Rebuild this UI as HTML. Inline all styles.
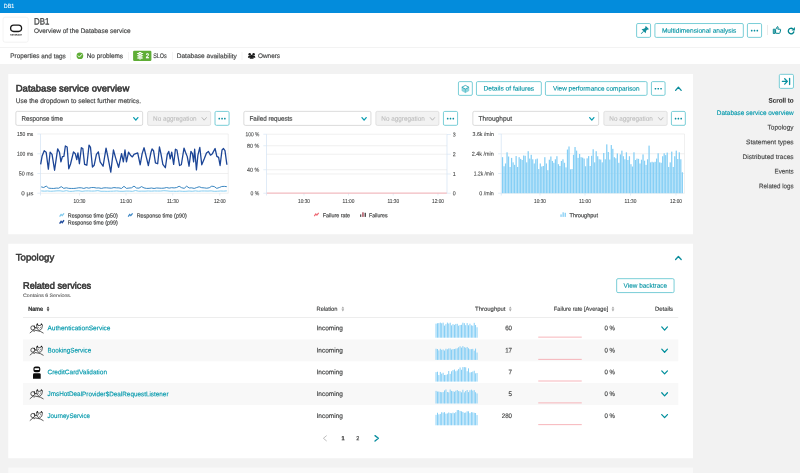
<!DOCTYPE html>
<html><head><meta charset="utf-8"><title>DB1</title>
<style>
html,body{margin:0;padding:0;}
body{width:800px;height:473px;overflow:hidden;position:relative;background:#f2f2f2;}
#w{position:absolute;left:0;top:0;width:800px;height:473px;will-change:transform;}
svg{position:absolute;left:0;top:0;display:block;font-family:"Liberation Sans",sans-serif;}
text{white-space:pre;}
</style></head><body><div id="w">
<svg width="800" height="473" viewBox="0 0 800 473">
<rect x="0.00" y="0.00" width="800.00" height="13.10" fill="#038cdc"/>
<text x="3.75" y="8.00" font-size="5.99" fill="#fff" stroke="#fff" stroke-width="0.1" textLength="10.50" lengthAdjust="spacingAndGlyphs" transform="rotate(0.06 3.75 8.00)">DB1</text>
<rect x="0.00" y="13.00" width="800.00" height="51.00" fill="#fff"/>
<rect x="0.00" y="47.00" width="800.00" height="0.60" fill="#ebebeb"/>
<rect x="3.05" y="17.20" width="25.15" height="25.00" fill="#fff" stroke="#ebebeb" stroke-width="0.6" rx="2"/>
<rect x="10.6" y="25.2" width="11" height="6.3" rx="3.15" fill="none" stroke="#1a1a1a" stroke-width="1.3"/>
<text x="10.30" y="35.50" font-size="2.03" fill="#3a3a3a" stroke="#3a3a3a" stroke-width="0.05" font-weight="bold" textLength="11.60" lengthAdjust="spacingAndGlyphs" transform="rotate(0.06 10.30 35.50)">DATABASE</text>
<text x="34.00" y="24.40" font-size="9.10" fill="#454646" stroke="#454646" stroke-width="0.3" textLength="15.40" lengthAdjust="spacingAndGlyphs" transform="rotate(0.06 34.00 24.40)">DB1</text>
<text x="34.00" y="32.90" font-size="6.63" fill="#454646" stroke="#454646" stroke-width="0.18" textLength="96.50" lengthAdjust="spacingAndGlyphs" transform="rotate(0.06 34.00 32.90)">Overview of the Database service</text>
<rect x="636.62" y="23.53" width="13.95" height="13.85" fill="#fff" stroke="#62c5d0" stroke-width="0.85" rx="1.3"/>
<g transform="translate(644.4 30.5) rotate(45) scale(1.12)" fill="#0e8c9a"><rect x="-1.9" y="-3.7" width="3.8" height="1.1" rx="0.3"/><rect x="-1.3" y="-2.9" width="2.6" height="2.6"/><path d="M-2.6 1.0 L2.6 1.0 L1.5 -0.7 L-1.5 -0.7 Z"/><rect x="-0.35" y="0.9" width="0.7" height="3.3"/></g>
<rect x="654.92" y="23.53" width="88.40" height="13.85" fill="#fff" stroke="#62c5d0" stroke-width="0.85" rx="1.3"/>
<text x="661.88" y="32.70" font-size="6.63" fill="#0093a3" stroke="#0093a3" stroke-width="0.12" textLength="74.50" lengthAdjust="spacingAndGlyphs" transform="rotate(0.06 661.88 32.70)">Multidimensional analysis</text>
<rect x="747.42" y="23.53" width="14.15" height="13.85" fill="#fff" stroke="#62c5d0" stroke-width="0.85" rx="1.3"/>
<g fill="#0a8fa0"><rect x="750.90" y="29.85" width="1.6" height="1.6" rx="0.45"/><rect x="753.70" y="29.85" width="1.6" height="1.6" rx="0.45"/><rect x="756.50" y="29.85" width="1.6" height="1.6" rx="0.45"/></g>
<rect x="767.30" y="25.00" width="0.60" height="10.00" fill="#ddd"/>
<g fill="none" stroke="#00848e" stroke-width="1.0" stroke-linejoin="round"><rect x="773.3" y="29.2" width="1.5" height="4.3"/><path d="M775.6 33.2 L775.6 29.6 L777.4 26.6 Q778.4 26.6 778.1 27.8 L777.8 29.2 L780.2 29.2 Q780.8 29.3 780.6 30 L779.9 32.8 Q779.7 33.4 779.1 33.4 Z"/></g>
<path d="M793.9 31.4 A2.8 2.8 0 1 1 792.9 28.9" fill="none" stroke="#00848e" stroke-width="1.35"/><path d="M794.9 27.0 L794.9 30.4 L791.5 30.4 Z" fill="#00848e"/>
<text x="10.25" y="58.10" font-size="6.63" fill="#454646" stroke="#454646" stroke-width="0.18" textLength="55.50" lengthAdjust="spacingAndGlyphs" transform="rotate(0.06 10.25 58.10)">Properties and tags</text>
<rect x="70.20" y="52.00" width="0.60" height="8.00" fill="#ebebeb"/>
<circle cx="79.9" cy="55.75" r="3.35" fill="#5ead35"/><polyline points="78.2,55.8 79.4,57.1 81.7,54.5" fill="none" stroke="#fff" stroke-width="0.95" stroke-linecap="round" stroke-linejoin="round"/>
<text x="86.75" y="58.10" font-size="6.63" fill="#454646" stroke="#454646" stroke-width="0.18" textLength="36.25" lengthAdjust="spacingAndGlyphs" transform="rotate(0.06 86.75 58.10)">No problems</text>
<rect x="128.00" y="52.00" width="0.60" height="8.00" fill="#ebebeb"/>
<rect x="133.10" y="50.80" width="18.30" height="10.10" fill="#5ead35" rx="1.2"/>
<g fill="#fff"><rect x="138.5" y="52" width="3.1" height="7.4" rx="1.3"/><rect x="136.9" y="53.1" width="6.3" height="1.0" rx="0.4" opacity="0.9"/><rect x="136.9" y="55.3" width="6.3" height="1.0" rx="0.4" opacity="0.9"/><rect x="136.9" y="57.5" width="6.3" height="1.0" rx="0.4" opacity="0.9"/></g><g fill="#5ead35"><circle cx="140.05" cy="53.6" r="0.6"/><circle cx="140.05" cy="55.8" r="0.6"/><circle cx="140.05" cy="58" r="0.6"/></g>
<text x="145.84" y="58.10" font-size="6.42" fill="#fff" stroke="#fff" stroke-width="0.3" textLength="3.32" lengthAdjust="spacingAndGlyphs" transform="rotate(0.06 145.84 58.10)">2</text>
<text x="153.25" y="58.10" font-size="6.63" fill="#454646" stroke="#454646" stroke-width="0.18" textLength="13.50" lengthAdjust="spacingAndGlyphs" transform="rotate(0.06 153.25 58.10)">SLOs</text>
<rect x="172.20" y="52.00" width="0.60" height="8.00" fill="#ebebeb"/>
<text x="176.75" y="58.10" font-size="6.63" fill="#454646" stroke="#454646" stroke-width="0.18" textLength="60.00" lengthAdjust="spacingAndGlyphs" transform="rotate(0.06 176.75 58.10)">Database availability</text>
<rect x="241.70" y="52.00" width="0.60" height="8.00" fill="#ebebeb"/>
<g fill="#1c1c1c"><circle cx="249.7" cy="54.3" r="1.25"/><circle cx="253.6" cy="54.3" r="1.25"/><path d="M247.9 57.7 Q247.9 55.6 249.7 55.6 L253.6 55.6 Q255.4 55.6 255.4 57.7 Z"/><circle cx="251.65" cy="56" r="1.3"/><path d="M249.6 58.7 Q249.6 57 251.65 57 Q253.7 57 253.7 58.7 Z"/></g>
<text x="258.00" y="58.10" font-size="6.63" fill="#454646" stroke="#454646" stroke-width="0.18" textLength="22.00" lengthAdjust="spacingAndGlyphs" transform="rotate(0.06 258.00 58.10)">Owners</text>
<rect x="0.00" y="64.00" width="800.00" height="409.00" fill="#f2f2f2"/>
<rect x="8.25" y="74.00" width="684.75" height="160.25" fill="#fff"/>
<text x="15.75" y="91.50" font-size="9.42" fill="#363636" stroke="#363636" stroke-width="0.55" textLength="113.50" lengthAdjust="spacingAndGlyphs" transform="rotate(0.06 15.75 91.50)">Database service overview</text>
<text x="15.75" y="103.00" font-size="6.63" fill="#454646" stroke="#454646" stroke-width="0.18" textLength="125.25" lengthAdjust="spacingAndGlyphs" transform="rotate(0.06 15.75 103.00)">Use the dropdown to select further metrics.</text>
<rect x="458.43" y="81.62" width="13.90" height="13.75" fill="#fff" stroke="#62c5d0" stroke-width="0.85" rx="1.3"/>
<path d="M461.9 87.2 L465.4 89.1 L468.9 87.2 L468.9 90.8 L465.4 92.7 L461.9 90.8 Z" fill="#8fd6de" stroke="#5fc1cc" stroke-width="0.4"/><path d="M465.4 85.4 L468.9 87.2 L465.4 89.0 L461.9 87.2 Z" fill="#fff" stroke="#1f9fae" stroke-width="0.8" stroke-linejoin="round"/><path d="M465.4 89.2 L465.4 92.6" stroke="#3fb2bf" stroke-width="0.6"/>
<rect x="476.43" y="81.62" width="64.90" height="13.75" fill="#fff" stroke="#62c5d0" stroke-width="0.85" rx="1.3"/>
<text x="483.62" y="90.60" font-size="6.63" fill="#0093a3" stroke="#0093a3" stroke-width="0.12" textLength="50.50" lengthAdjust="spacingAndGlyphs" transform="rotate(0.06 483.62 90.60)">Details of failures</text>
<rect x="545.42" y="81.62" width="101.65" height="13.75" fill="#fff" stroke="#62c5d0" stroke-width="0.85" rx="1.3"/>
<text x="553.00" y="90.60" font-size="6.63" fill="#0093a3" stroke="#0093a3" stroke-width="0.12" textLength="86.50" lengthAdjust="spacingAndGlyphs" transform="rotate(0.06 553.00 90.60)">View performance comparison</text>
<rect x="651.42" y="81.62" width="13.65" height="13.75" fill="#fff" stroke="#62c5d0" stroke-width="0.85" rx="1.3"/>
<g fill="#0a8fa0"><rect x="654.65" y="87.90" width="1.6" height="1.6" rx="0.45"/><rect x="657.45" y="87.90" width="1.6" height="1.6" rx="0.45"/><rect x="660.25" y="87.90" width="1.6" height="1.6" rx="0.45"/></g>
<polyline points="675.6,90.35 678.4,87.25 681.2,90.35" fill="none" stroke="#0a8d9c" stroke-width="1.3" stroke-linecap="round" stroke-linejoin="round"/>
<rect x="15.85" y="111.35" width="126.80" height="14.05" fill="#fff" stroke="#ccc" stroke-width="0.7" rx="1.5"/>
<text x="21.50" y="120.80" font-size="6.63" fill="#454646" stroke="#454646" stroke-width="0.18" textLength="41.50" lengthAdjust="spacingAndGlyphs" transform="rotate(0.06 21.50 120.80)">Response time</text>
<polyline points="133.70000000000002,117.60000000000001 135.8,120.2 137.9,117.60000000000001" fill="none" stroke="#0a9db0" stroke-width="1.25" stroke-linecap="round" stroke-linejoin="round"/>
<rect x="147.60" y="111.35" width="63.05" height="14.05" fill="#f2f2f2" stroke="#d9d9d9" stroke-width="0.7" rx="1.5"/>
<text x="153.05" y="120.80" font-size="6.63" fill="#bdbdbd" stroke="#bdbdbd" stroke-width="0.1" textLength="43.50" lengthAdjust="spacingAndGlyphs" transform="rotate(0.06 153.05 120.80)">No aggregation</text>
<polyline points="202.0,117.60000000000001 204.2,120.2 206.4,117.60000000000001" fill="none" stroke="#b2b2b2" stroke-width="0.9" stroke-linecap="round" stroke-linejoin="round"/>
<rect x="215.03" y="111.42" width="14.05" height="13.90" fill="#fff" stroke="#62c5d0" stroke-width="0.85" rx="1.3"/>
<g fill="#0a8fa0"><rect x="218.45" y="117.78" width="1.6" height="1.6" rx="0.45"/><rect x="221.25" y="117.78" width="1.6" height="1.6" rx="0.45"/><rect x="224.05" y="117.78" width="1.6" height="1.6" rx="0.45"/></g>
<rect x="243.85" y="111.35" width="127.10" height="14.05" fill="#fff" stroke="#ccc" stroke-width="0.7" rx="1.5"/>
<text x="249.50" y="120.80" font-size="6.63" fill="#454646" stroke="#454646" stroke-width="0.18" textLength="43.00" lengthAdjust="spacingAndGlyphs" transform="rotate(0.06 249.50 120.80)">Failed requests</text>
<polyline points="362.0,117.60000000000001 364.1,120.2 366.2,117.60000000000001" fill="none" stroke="#0a9db0" stroke-width="1.25" stroke-linecap="round" stroke-linejoin="round"/>
<rect x="375.85" y="111.35" width="63.05" height="14.05" fill="#f2f2f2" stroke="#d9d9d9" stroke-width="0.7" rx="1.5"/>
<text x="381.30" y="120.80" font-size="6.63" fill="#bdbdbd" stroke="#bdbdbd" stroke-width="0.1" textLength="43.50" lengthAdjust="spacingAndGlyphs" transform="rotate(0.06 381.30 120.80)">No aggregation</text>
<polyline points="430.25,117.60000000000001 432.45,120.2 434.65,117.60000000000001" fill="none" stroke="#b2b2b2" stroke-width="0.9" stroke-linecap="round" stroke-linejoin="round"/>
<rect x="443.43" y="111.42" width="14.15" height="13.90" fill="#fff" stroke="#62c5d0" stroke-width="0.85" rx="1.3"/>
<g fill="#0a8fa0"><rect x="446.90" y="117.78" width="1.6" height="1.6" rx="0.45"/><rect x="449.70" y="117.78" width="1.6" height="1.6" rx="0.45"/><rect x="452.50" y="117.78" width="1.6" height="1.6" rx="0.45"/></g>
<rect x="472.85" y="111.35" width="125.80" height="14.05" fill="#fff" stroke="#ccc" stroke-width="0.7" rx="1.5"/>
<text x="478.50" y="120.80" font-size="6.63" fill="#454646" stroke="#454646" stroke-width="0.18" textLength="33.50" lengthAdjust="spacingAndGlyphs" transform="rotate(0.06 478.50 120.80)">Throughput</text>
<polyline points="589.6999999999999,117.60000000000001 591.8,120.2 593.9,117.60000000000001" fill="none" stroke="#0a9db0" stroke-width="1.25" stroke-linecap="round" stroke-linejoin="round"/>
<rect x="603.85" y="111.35" width="63.30" height="14.05" fill="#f2f2f2" stroke="#d9d9d9" stroke-width="0.7" rx="1.5"/>
<text x="609.30" y="120.80" font-size="6.63" fill="#bdbdbd" stroke="#bdbdbd" stroke-width="0.1" textLength="43.50" lengthAdjust="spacingAndGlyphs" transform="rotate(0.06 609.30 120.80)">No aggregation</text>
<polyline points="658.5,117.60000000000001 660.7,120.2 662.9,117.60000000000001" fill="none" stroke="#b2b2b2" stroke-width="0.9" stroke-linecap="round" stroke-linejoin="round"/>
<rect x="671.42" y="111.42" width="13.90" height="13.90" fill="#fff" stroke="#62c5d0" stroke-width="0.85" rx="1.3"/>
<g fill="#0a8fa0"><rect x="674.77" y="117.78" width="1.6" height="1.6" rx="0.45"/><rect x="677.58" y="117.78" width="1.6" height="1.6" rx="0.45"/><rect x="680.38" y="117.78" width="1.6" height="1.6" rx="0.45"/></g>
<line x1="40.5" y1="134" x2="228.25" y2="134" stroke="#e6e6e6" stroke-width="0.6"/><line x1="40.5" y1="153.75" x2="228.25" y2="153.75" stroke="#e6e6e6" stroke-width="0.6"/><line x1="40.5" y1="173.5" x2="228.25" y2="173.5" stroke="#e6e6e6" stroke-width="0.6"/><line x1="40.5" y1="193.25" x2="228.25" y2="193.25" stroke="#e6e6e6" stroke-width="0.6"/><line x1="37.3" y1="134" x2="40.5" y2="134" stroke="#d2e2f3" stroke-width="0.6"/><line x1="37.3" y1="153.75" x2="40.5" y2="153.75" stroke="#d2e2f3" stroke-width="0.6"/><line x1="37.3" y1="173.5" x2="40.5" y2="173.5" stroke="#d2e2f3" stroke-width="0.6"/><line x1="37.3" y1="193.25" x2="40.5" y2="193.25" stroke="#d2e2f3" stroke-width="0.6"/><line x1="228.25" y1="134" x2="228.25" y2="193.25" stroke="#e6e6e6" stroke-width="0.6"/><line x1="40.5" y1="134" x2="40.5" y2="195.5" stroke="#d2e2f3" stroke-width="0.7"/><line x1="79.5" y1="193.25" x2="79.5" y2="195.5" stroke="#d2e2f3" stroke-width="0.6"/><line x1="126" y1="193.25" x2="126" y2="195.5" stroke="#d2e2f3" stroke-width="0.6"/><line x1="172.75" y1="193.25" x2="172.75" y2="195.5" stroke="#d2e2f3" stroke-width="0.6"/><line x1="219.75" y1="193.25" x2="219.75" y2="195.5" stroke="#d2e2f3" stroke-width="0.6"/><polyline points="40.66,164.32 42.14,155.89 44.21,150.71 46.14,152.19 48.36,169.20 50.13,152.19 52.05,154.41 54.57,170.24 57.67,148.93 59.45,152.19 60.93,161.80 62.41,156.63 63.89,156.33 65.37,145.98 67.14,147.01 68.77,168.76 70.54,164.02 73.50,151.89 75.28,153.67 76.76,159.59 77.94,152.93 79.42,163.73 81.34,147.75 82.82,148.49 84.60,164.32 86.82,165.21 89.04,145.09 90.51,147.46 92.44,166.98 94.21,165.21 96.43,154.41 98.36,151.89 100.13,161.80 103.09,166.24 106.05,148.05 107.53,155.15 110.78,172.16 113.44,149.97 115.66,158.11 118.62,167.28 121.58,153.67 123.36,161.80 124.98,149.97 126.46,161.80 128.53,152.19 130.46,155.15 132.38,156.92 134.00,154.41 135.78,153.67 137.70,152.93 140.21,164.76 142.14,153.67 144.06,147.75 145.83,155.15 148.35,165.50 151.01,152.19 152.05,148.93 153.53,150.71 155.45,162.84 157.67,163.73 159.44,147.01 160.92,153.67 162.85,164.32 165.36,167.72 167.28,154.41 168.76,151.45 170.24,158.85 171.72,152.19 173.64,164.32 175.42,149.23 176.90,149.97 179.56,165.50 181.34,164.76 184.00,148.05 185.48,152.19 187.25,156.63 189.03,166.24 190.95,151.45 192.43,153.67 193.62,161.80 194.65,149.23 196.43,169.94 197.91,155.15 199.83,147.46 201.75,164.76 204.27,158.85 206.49,152.93 208.41,151.45 210.48,155.15 212.40,153.67 215.07,148.49 216.84,156.33 218.62,157.37 220.09,165.50 222.02,149.97 223.50,148.49 224.98,150.71 226.90,164.76" fill="none" stroke="#1c4596" stroke-width="1.3" stroke-linejoin="round"/><polyline points="41.20,190.93 44.35,191.17 47.49,190.96 50.64,191.25 53.78,191.10 56.93,190.85 60.07,190.84 63.22,191.25 66.37,190.67 69.51,191.35 72.66,191.29 75.80,190.87 78.95,190.80 82.09,191.33 85.24,190.93 88.39,190.91 91.53,191.08 94.68,191.02 97.82,190.64 100.97,191.28 104.12,191.24 107.26,191.33 110.41,191.23 113.55,191.14 116.70,190.91 119.84,191.26 122.99,191.31 126.14,191.05 129.28,191.08 132.43,191.35 135.57,190.56 138.72,191.21 141.86,191.10 145.01,191.13 148.16,190.96 151.30,191.13 154.45,190.94 157.59,191.02 160.74,191.02 163.88,190.70 167.03,190.88 170.18,191.24 173.32,191.19 176.47,191.30 179.61,191.05 182.76,191.33 185.91,191.29 189.05,191.04 192.20,191.29 195.34,190.88 198.49,191.24 201.63,190.97 204.78,190.98 207.93,191.06 211.07,190.88 214.22,191.30 217.36,191.22 220.51,190.98 223.65,191.11 226.80,190.86" fill="none" stroke="#86cdf0" stroke-width="1.0" stroke-linejoin="round"/><polyline points="41.20,186.86 43.71,187.52 46.22,186.08 48.72,188.15 51.23,188.39 53.74,188.46 56.25,188.10 58.76,188.19 61.26,186.61 63.77,188.38 66.28,187.81 68.79,188.35 71.30,188.44 73.81,188.46 76.31,188.20 78.82,187.76 81.33,187.81 83.84,188.45 86.35,187.64 88.85,188.17 91.36,187.55 93.87,187.53 96.38,188.01 98.89,187.91 101.39,188.42 103.90,187.87 106.41,187.80 108.92,188.04 111.43,188.17 113.94,187.59 116.44,187.86 118.95,187.90 121.46,188.45 123.97,186.30 126.48,188.40 128.98,188.05 131.49,187.83 134.00,186.09 136.51,188.04 139.02,188.15 141.52,186.59 144.03,187.91 146.54,188.42 149.05,188.35 151.56,188.02 154.06,188.49 156.57,187.97 159.08,188.14 161.59,188.28 164.10,188.11 166.61,187.52 169.11,188.13 171.62,187.67 174.13,187.93 176.64,187.54 179.15,186.25 181.65,187.72 184.16,188.37 186.67,186.18 189.18,187.97 191.69,187.84 194.19,188.43 196.70,187.54 199.21,186.75 201.72,187.70 204.23,187.88 206.74,188.22 209.24,187.75 211.75,186.17 214.26,186.57 216.77,188.39 219.28,187.56 221.78,186.50 224.29,186.39 226.80,186.67" fill="none" stroke="#2f7fbd" stroke-width="0.95" stroke-linejoin="round"/>
<text x="17.05" y="135.90" font-size="5.67" fill="#454646" stroke="#454646" stroke-width="0.1" textLength="16.25" lengthAdjust="spacingAndGlyphs" transform="rotate(0.06 17.05 135.90)">150 ms</text>
<text x="17.05" y="155.65" font-size="5.67" fill="#454646" stroke="#454646" stroke-width="0.1" textLength="16.25" lengthAdjust="spacingAndGlyphs" transform="rotate(0.06 17.05 155.65)">100 ms</text>
<text x="18.80" y="175.40" font-size="5.67" fill="#454646" stroke="#454646" stroke-width="0.1" textLength="14.50" lengthAdjust="spacingAndGlyphs" transform="rotate(0.06 18.80 175.40)">50 ms</text>
<text x="21.30" y="195.15" font-size="5.67" fill="#454646" stroke="#454646" stroke-width="0.1" textLength="12.00" lengthAdjust="spacingAndGlyphs" transform="rotate(0.06 21.30 195.15)">0 µs</text>
<text x="73.62" y="203.00" font-size="5.67" fill="#454646" stroke="#454646" stroke-width="0.1" textLength="11.75" lengthAdjust="spacingAndGlyphs" transform="rotate(0.06 73.62 203.00)">10:30</text>
<text x="120.12" y="203.00" font-size="5.67" fill="#454646" stroke="#454646" stroke-width="0.1" textLength="11.75" lengthAdjust="spacingAndGlyphs" transform="rotate(0.06 120.12 203.00)">11:00</text>
<text x="166.88" y="203.00" font-size="5.67" fill="#454646" stroke="#454646" stroke-width="0.1" textLength="11.75" lengthAdjust="spacingAndGlyphs" transform="rotate(0.06 166.88 203.00)">11:30</text>
<text x="213.88" y="203.00" font-size="5.67" fill="#454646" stroke="#454646" stroke-width="0.1" textLength="11.75" lengthAdjust="spacingAndGlyphs" transform="rotate(0.06 213.88 203.00)">12:00</text>
<polyline points="59.6,216.6 61.1,214.4 62.2,215.6 64.0,213.3" fill="none" stroke="#7dc8ec" stroke-width="1.25"/><polyline points="128.2,216.6 129.7,214.4 130.79999999999998,215.6 132.6,213.3" fill="none" stroke="#3b86c4" stroke-width="1.25"/><polyline points="59.6,223.6 61.1,221.4 62.2,222.6 64.0,220.3" fill="none" stroke="#1f4a9c" stroke-width="1.4"/>
<text x="67.80" y="217.40" font-size="5.67" fill="#454646" stroke="#454646" stroke-width="0.18" textLength="50.00" lengthAdjust="spacingAndGlyphs" transform="rotate(0.06 67.80 217.40)">Response time (p50)</text>
<text x="136.70" y="217.40" font-size="5.67" fill="#454646" stroke="#454646" stroke-width="0.18" textLength="50.00" lengthAdjust="spacingAndGlyphs" transform="rotate(0.06 136.70 217.40)">Response time (p90)</text>
<text x="67.80" y="224.40" font-size="5.67" fill="#454646" stroke="#454646" stroke-width="0.18" textLength="50.00" lengthAdjust="spacingAndGlyphs" transform="rotate(0.06 67.80 224.40)">Response time (p99)</text>
<line x1="266.5" y1="134.25" x2="447" y2="134.25" stroke="#e6e6e6" stroke-width="0.6"/><line x1="266.5" y1="145.75" x2="447" y2="145.75" stroke="#e6e6e6" stroke-width="0.6"/><line x1="266.5" y1="154.25" x2="447" y2="154.25" stroke="#e6e6e6" stroke-width="0.6"/><line x1="266.5" y1="169.75" x2="447" y2="169.75" stroke="#e6e6e6" stroke-width="0.6"/><line x1="266.5" y1="174" x2="447" y2="174" stroke="#e6e6e6" stroke-width="0.6"/><line x1="266.5" y1="193.25" x2="447" y2="193.25" stroke="#e6e6e6" stroke-width="0.6"/><line x1="263.3" y1="134.25" x2="266.5" y2="134.25" stroke="#d2e2f3" stroke-width="0.6"/><line x1="263.3" y1="145.75" x2="266.5" y2="145.75" stroke="#d2e2f3" stroke-width="0.6"/><line x1="263.3" y1="169.75" x2="266.5" y2="169.75" stroke="#d2e2f3" stroke-width="0.6"/><line x1="263.3" y1="193.25" x2="266.5" y2="193.25" stroke="#d2e2f3" stroke-width="0.6"/><line x1="447" y1="134.5" x2="450.8" y2="134.5" stroke="#d2e2f3" stroke-width="0.6"/><line x1="447" y1="154.25" x2="450.8" y2="154.25" stroke="#d2e2f3" stroke-width="0.6"/><line x1="447" y1="174" x2="450.8" y2="174" stroke="#d2e2f3" stroke-width="0.6"/><line x1="447" y1="193.25" x2="450.8" y2="193.25" stroke="#d2e2f3" stroke-width="0.6"/><line x1="266.5" y1="134.25" x2="266.5" y2="195.5" stroke="#d2e2f3" stroke-width="0.7"/><line x1="447" y1="134.25" x2="447" y2="193.25" stroke="#d2e2f3" stroke-width="0.7"/><line x1="304" y1="193.25" x2="304" y2="195.5" stroke="#d2e2f3" stroke-width="0.6"/><line x1="348.5" y1="193.25" x2="348.5" y2="195.5" stroke="#d2e2f3" stroke-width="0.6"/><line x1="393.25" y1="193.25" x2="393.25" y2="195.5" stroke="#d2e2f3" stroke-width="0.6"/><line x1="438" y1="193.25" x2="438" y2="195.5" stroke="#d2e2f3" stroke-width="0.6"/><line x1="266.8" y1="193.1" x2="446.8" y2="193.1" stroke="#f4a3ab" stroke-width="0.85"/>
<text x="245.55" y="136.15" font-size="5.67" fill="#454646" stroke="#454646" stroke-width="0.1" textLength="13.75" lengthAdjust="spacingAndGlyphs" transform="rotate(0.06 245.55 136.15)">100 %</text>
<text x="247.05" y="147.65" font-size="5.67" fill="#454646" stroke="#454646" stroke-width="0.1" textLength="12.25" lengthAdjust="spacingAndGlyphs" transform="rotate(0.06 247.05 147.65)">80 %</text>
<text x="247.05" y="171.65" font-size="5.67" fill="#454646" stroke="#454646" stroke-width="0.1" textLength="12.25" lengthAdjust="spacingAndGlyphs" transform="rotate(0.06 247.05 171.65)">40 %</text>
<text x="250.55" y="195.15" font-size="5.67" fill="#454646" stroke="#454646" stroke-width="0.1" textLength="8.75" lengthAdjust="spacingAndGlyphs" transform="rotate(0.06 250.55 195.15)">0 %</text>
<text x="452.80" y="136.40" font-size="5.67" fill="#454646" stroke="#454646" stroke-width="0.1" textLength="2.93" lengthAdjust="spacingAndGlyphs" transform="rotate(0.06 452.80 136.40)">3</text>
<text x="452.80" y="156.15" font-size="5.67" fill="#454646" stroke="#454646" stroke-width="0.1" textLength="2.93" lengthAdjust="spacingAndGlyphs" transform="rotate(0.06 452.80 156.15)">2</text>
<text x="452.80" y="175.90" font-size="5.67" fill="#454646" stroke="#454646" stroke-width="0.1" textLength="2.93" lengthAdjust="spacingAndGlyphs" transform="rotate(0.06 452.80 175.90)">1</text>
<text x="452.80" y="195.15" font-size="5.67" fill="#454646" stroke="#454646" stroke-width="0.1" textLength="2.93" lengthAdjust="spacingAndGlyphs" transform="rotate(0.06 452.80 195.15)">0</text>
<text x="298.12" y="203.00" font-size="5.67" fill="#454646" stroke="#454646" stroke-width="0.1" textLength="11.75" lengthAdjust="spacingAndGlyphs" transform="rotate(0.06 298.12 203.00)">10:30</text>
<text x="342.62" y="203.00" font-size="5.67" fill="#454646" stroke="#454646" stroke-width="0.1" textLength="11.75" lengthAdjust="spacingAndGlyphs" transform="rotate(0.06 342.62 203.00)">11:00</text>
<text x="387.38" y="203.00" font-size="5.67" fill="#454646" stroke="#454646" stroke-width="0.1" textLength="11.75" lengthAdjust="spacingAndGlyphs" transform="rotate(0.06 387.38 203.00)">11:30</text>
<text x="432.12" y="203.00" font-size="5.67" fill="#454646" stroke="#454646" stroke-width="0.1" textLength="11.75" lengthAdjust="spacingAndGlyphs" transform="rotate(0.06 432.12 203.00)">12:00</text>
<polyline points="314.3,216.1 315.8,213.9 316.90000000000003,215.1 318.7,212.8" fill="none" stroke="#ee6873" stroke-width="1.2"/><rect x="360" y="214.4" width="1.3" height="2.5" fill="#5a5a5a"/><rect x="362.3" y="212.3" width="1.3" height="4.6" fill="#a23a4a"/><rect x="364.6" y="212.8" width="1.3" height="4.1" fill="#3c3c3c"/>
<text x="322.75" y="217.20" font-size="5.67" fill="#454646" stroke="#454646" stroke-width="0.18" textLength="27.25" lengthAdjust="spacingAndGlyphs" transform="rotate(0.06 322.75 217.20)">Failure rate</text>
<text x="369.00" y="217.20" font-size="5.67" fill="#454646" stroke="#454646" stroke-width="0.18" textLength="18.50" lengthAdjust="spacingAndGlyphs" transform="rotate(0.06 369.00 217.20)">Failures</text>
<line x1="501.25" y1="134" x2="684.5" y2="134" stroke="#e6e6e6" stroke-width="0.6"/><line x1="501.25" y1="153.75" x2="684.5" y2="153.75" stroke="#e6e6e6" stroke-width="0.6"/><line x1="501.25" y1="173.5" x2="684.5" y2="173.5" stroke="#e6e6e6" stroke-width="0.6"/><line x1="501.25" y1="193.25" x2="684.5" y2="193.25" stroke="#e6e6e6" stroke-width="0.6"/><line x1="498.1" y1="134" x2="501.25" y2="134" stroke="#d2e2f3" stroke-width="0.6"/><line x1="498.1" y1="153.75" x2="501.25" y2="153.75" stroke="#d2e2f3" stroke-width="0.6"/><line x1="498.1" y1="173.5" x2="501.25" y2="173.5" stroke="#d2e2f3" stroke-width="0.6"/><line x1="498.1" y1="193.25" x2="501.25" y2="193.25" stroke="#d2e2f3" stroke-width="0.6"/><line x1="684.5" y1="134" x2="684.5" y2="193.25" stroke="#e6e6e6" stroke-width="0.6"/><line x1="501.25" y1="134" x2="501.25" y2="195.5" stroke="#d2e2f3" stroke-width="0.7"/><line x1="540" y1="193.25" x2="540" y2="195.5" stroke="#d2e2f3" stroke-width="0.6"/><line x1="585" y1="193.25" x2="585" y2="195.5" stroke="#d2e2f3" stroke-width="0.6"/><line x1="630.5" y1="193.25" x2="630.5" y2="195.5" stroke="#d2e2f3" stroke-width="0.6"/><line x1="676" y1="193.25" x2="676" y2="195.5" stroke="#d2e2f3" stroke-width="0.6"/><g fill="#86cff5"><rect x="501.90" y="157.20" width="1.25" height="36.05"/><rect x="503.41" y="166.26" width="1.25" height="26.99"/><rect x="504.92" y="163.47" width="1.25" height="29.78"/><rect x="506.43" y="152.32" width="1.25" height="40.93"/><rect x="507.94" y="156.50" width="1.25" height="36.75"/><rect x="509.45" y="166.96" width="1.25" height="26.29"/><rect x="510.96" y="157.89" width="1.25" height="35.36"/><rect x="512.48" y="162.36" width="1.25" height="30.89"/><rect x="513.99" y="164.87" width="1.25" height="28.38"/><rect x="515.50" y="156.08" width="1.25" height="37.17"/><rect x="517.01" y="166.96" width="1.25" height="26.29"/><rect x="518.52" y="157.20" width="1.25" height="36.05"/><rect x="520.03" y="158.87" width="1.25" height="34.38"/><rect x="521.54" y="159.99" width="1.25" height="33.26"/><rect x="523.05" y="155.52" width="1.25" height="37.73"/><rect x="524.56" y="155.80" width="1.25" height="37.45"/><rect x="526.07" y="162.36" width="1.25" height="30.89"/><rect x="527.58" y="151.20" width="1.25" height="42.05"/><rect x="529.10" y="158.59" width="1.25" height="34.66"/><rect x="530.61" y="154.83" width="1.25" height="38.42"/><rect x="532.12" y="159.29" width="1.25" height="33.96"/><rect x="533.63" y="163.47" width="1.25" height="29.78"/><rect x="535.14" y="159.29" width="1.25" height="33.96"/><rect x="536.65" y="158.59" width="1.25" height="34.66"/><rect x="538.16" y="169.05" width="1.25" height="24.20"/><rect x="539.67" y="163.47" width="1.25" height="29.78"/><rect x="541.18" y="166.54" width="1.25" height="26.71"/><rect x="542.69" y="165.98" width="1.25" height="27.27"/><rect x="544.20" y="157.20" width="1.25" height="36.05"/><rect x="545.71" y="163.47" width="1.25" height="29.78"/><rect x="547.23" y="170.17" width="1.25" height="23.08"/><rect x="548.74" y="159.71" width="1.25" height="33.54"/><rect x="550.25" y="156.50" width="1.25" height="36.75"/><rect x="551.76" y="160.96" width="1.25" height="32.29"/><rect x="553.27" y="162.78" width="1.25" height="30.47"/><rect x="554.78" y="159.29" width="1.25" height="33.96"/><rect x="556.29" y="156.22" width="1.25" height="37.03"/><rect x="557.80" y="164.17" width="1.25" height="29.08"/><rect x="559.31" y="165.98" width="1.25" height="27.27"/><rect x="560.82" y="160.96" width="1.25" height="32.29"/><rect x="562.33" y="159.29" width="1.25" height="33.96"/><rect x="563.84" y="162.78" width="1.25" height="30.47"/><rect x="565.36" y="167.38" width="1.25" height="25.87"/><rect x="566.87" y="149.53" width="1.25" height="43.72"/><rect x="568.38" y="146.46" width="1.25" height="46.79"/><rect x="569.89" y="169.33" width="1.25" height="23.92"/><rect x="571.40" y="169.05" width="1.25" height="24.20"/><rect x="572.91" y="154.83" width="1.25" height="38.42"/><rect x="574.42" y="147.02" width="1.25" height="46.23"/><rect x="575.93" y="150.64" width="1.25" height="42.61"/><rect x="577.44" y="157.89" width="1.25" height="35.36"/><rect x="578.95" y="153.99" width="1.25" height="39.26"/><rect x="580.46" y="157.20" width="1.25" height="36.05"/><rect x="581.97" y="157.62" width="1.25" height="35.63"/><rect x="583.49" y="158.59" width="1.25" height="34.66"/><rect x="585.00" y="166.26" width="1.25" height="26.99"/><rect x="586.51" y="158.31" width="1.25" height="34.94"/><rect x="588.02" y="156.08" width="1.25" height="37.17"/><rect x="589.53" y="165.98" width="1.25" height="27.27"/><rect x="591.04" y="155.80" width="1.25" height="37.45"/><rect x="592.55" y="149.25" width="1.25" height="44.00"/><rect x="594.06" y="162.36" width="1.25" height="30.89"/><rect x="595.57" y="151.20" width="1.25" height="42.05"/><rect x="597.08" y="156.22" width="1.25" height="37.03"/><rect x="598.59" y="159.29" width="1.25" height="33.96"/><rect x="600.10" y="159.57" width="1.25" height="33.68"/><rect x="601.62" y="162.36" width="1.25" height="30.89"/><rect x="603.13" y="153.01" width="1.25" height="40.24"/><rect x="604.64" y="159.29" width="1.25" height="33.96"/><rect x="606.15" y="144.37" width="1.25" height="48.88"/><rect x="607.66" y="152.04" width="1.25" height="41.21"/><rect x="609.17" y="159.57" width="1.25" height="33.68"/><rect x="610.68" y="145.06" width="1.25" height="48.19"/><rect x="612.19" y="148.83" width="1.25" height="44.42"/><rect x="613.70" y="157.20" width="1.25" height="36.05"/><rect x="615.21" y="158.31" width="1.25" height="34.94"/><rect x="616.72" y="153.43" width="1.25" height="39.82"/><rect x="618.23" y="162.78" width="1.25" height="30.47"/><rect x="619.75" y="154.41" width="1.25" height="38.84"/><rect x="621.26" y="150.64" width="1.25" height="42.61"/><rect x="622.77" y="156.22" width="1.25" height="37.03"/><rect x="624.28" y="159.29" width="1.25" height="33.96"/><rect x="625.79" y="152.32" width="1.25" height="40.93"/><rect x="627.30" y="159.99" width="1.25" height="33.26"/><rect x="628.81" y="156.22" width="1.25" height="37.03"/><rect x="630.32" y="164.17" width="1.25" height="29.08"/><rect x="631.83" y="166.54" width="1.25" height="26.71"/><rect x="633.34" y="152.32" width="1.25" height="40.93"/><rect x="634.85" y="159.99" width="1.25" height="33.26"/><rect x="636.36" y="158.59" width="1.25" height="34.66"/><rect x="637.88" y="158.87" width="1.25" height="34.38"/><rect x="639.39" y="163.47" width="1.25" height="29.78"/><rect x="640.90" y="159.71" width="1.25" height="33.54"/><rect x="642.41" y="154.41" width="1.25" height="38.84"/><rect x="643.92" y="160.68" width="1.25" height="32.57"/><rect x="645.43" y="164.87" width="1.25" height="28.38"/><rect x="646.94" y="159.29" width="1.25" height="33.96"/><rect x="648.45" y="145.62" width="1.25" height="47.63"/><rect x="649.96" y="162.36" width="1.25" height="30.89"/><rect x="651.47" y="161.80" width="1.25" height="31.45"/><rect x="652.98" y="162.36" width="1.25" height="30.89"/><rect x="654.49" y="161.80" width="1.25" height="31.45"/><rect x="656.00" y="158.59" width="1.25" height="34.66"/><rect x="657.52" y="153.29" width="1.25" height="39.96"/><rect x="659.03" y="162.36" width="1.25" height="30.89"/><rect x="660.54" y="162.78" width="1.25" height="30.47"/><rect x="662.05" y="156.22" width="1.25" height="37.03"/><rect x="663.56" y="153.29" width="1.25" height="39.96"/><rect x="665.07" y="155.10" width="1.25" height="38.15"/><rect x="666.58" y="152.59" width="1.25" height="40.66"/><rect x="668.09" y="166.96" width="1.25" height="26.29"/><rect x="669.60" y="162.36" width="1.25" height="30.89"/><rect x="671.11" y="151.62" width="1.25" height="41.63"/><rect x="672.62" y="166.96" width="1.25" height="26.29"/><rect x="674.13" y="156.22" width="1.25" height="37.03"/><rect x="675.65" y="150.64" width="1.25" height="42.61"/><rect x="677.16" y="159.01" width="1.25" height="34.24"/><rect x="678.67" y="152.32" width="1.25" height="40.93"/><rect x="680.18" y="159.29" width="1.25" height="33.96"/><rect x="681.69" y="172.26" width="1.25" height="20.99"/></g>
<text x="472.55" y="135.90" font-size="5.67" fill="#454646" stroke="#454646" stroke-width="0.1" textLength="21.25" lengthAdjust="spacingAndGlyphs" transform="rotate(0.06 472.55 135.90)">3.6k /min</text>
<text x="471.80" y="155.65" font-size="5.67" fill="#454646" stroke="#454646" stroke-width="0.1" textLength="22.00" lengthAdjust="spacingAndGlyphs" transform="rotate(0.06 471.80 155.65)">2.4k /min</text>
<text x="473.80" y="175.40" font-size="5.67" fill="#454646" stroke="#454646" stroke-width="0.1" textLength="20.00" lengthAdjust="spacingAndGlyphs" transform="rotate(0.06 473.80 175.40)">1.2k /min</text>
<text x="479.30" y="195.15" font-size="5.67" fill="#454646" stroke="#454646" stroke-width="0.1" textLength="14.50" lengthAdjust="spacingAndGlyphs" transform="rotate(0.06 479.30 195.15)">0 /min</text>
<text x="534.12" y="203.00" font-size="5.67" fill="#454646" stroke="#454646" stroke-width="0.1" textLength="11.75" lengthAdjust="spacingAndGlyphs" transform="rotate(0.06 534.12 203.00)">10:30</text>
<text x="579.12" y="203.00" font-size="5.67" fill="#454646" stroke="#454646" stroke-width="0.1" textLength="11.75" lengthAdjust="spacingAndGlyphs" transform="rotate(0.06 579.12 203.00)">11:00</text>
<text x="624.62" y="203.00" font-size="5.67" fill="#454646" stroke="#454646" stroke-width="0.1" textLength="11.75" lengthAdjust="spacingAndGlyphs" transform="rotate(0.06 624.62 203.00)">11:30</text>
<text x="670.12" y="203.00" font-size="5.67" fill="#454646" stroke="#454646" stroke-width="0.1" textLength="11.75" lengthAdjust="spacingAndGlyphs" transform="rotate(0.06 670.12 203.00)">12:00</text>
<g fill="#86cff5"><rect x="560.4" y="214.4" width="1.3" height="2.5"/><rect x="562.5" y="212.3" width="1.3" height="4.6"/><rect x="564.6" y="212.8" width="1.3" height="4.1"/></g>
<text x="569.50" y="217.20" font-size="5.67" fill="#454646" stroke="#454646" stroke-width="0.18" textLength="28.50" lengthAdjust="spacingAndGlyphs" transform="rotate(0.06 569.50 217.20)">Throughput</text>
<rect x="779.32" y="74.33" width="14.15" height="14.05" fill="#fff" stroke="#62c5d0" stroke-width="0.85" rx="1.3"/>
<g fill="none" stroke="#0a91a0" stroke-width="1.3" stroke-linecap="round" stroke-linejoin="round"><path d="M782.4 81.4 L786.8 81.4 M784.7 78.7 L787.4 81.4 L784.7 84.1"/><path d="M789.6 78.4 L789.6 84.5"/></g>
<text x="768.60" y="102.80" font-size="6.74" fill="#333" stroke="#333" stroke-width="0.1" font-weight="bold" textLength="25.00" lengthAdjust="spacingAndGlyphs" transform="rotate(0.06 768.60 102.80)">Scroll to</text>
<text x="716.85" y="114.90" font-size="6.63" fill="#0098ab" stroke="#0098ab" stroke-width="0.14" textLength="76.75" lengthAdjust="spacingAndGlyphs" transform="rotate(0.06 716.85 114.90)">Database service overview</text>
<text x="767.60" y="129.57" font-size="6.63" fill="#454646" stroke="#454646" stroke-width="0.14" textLength="26.00" lengthAdjust="spacingAndGlyphs" transform="rotate(0.06 767.60 129.57)">Topology</text>
<text x="746.10" y="144.24" font-size="6.63" fill="#454646" stroke="#454646" stroke-width="0.14" textLength="47.50" lengthAdjust="spacingAndGlyphs" transform="rotate(0.06 746.10 144.24)">Statement types</text>
<text x="742.60" y="158.91" font-size="6.63" fill="#454646" stroke="#454646" stroke-width="0.14" textLength="51.00" lengthAdjust="spacingAndGlyphs" transform="rotate(0.06 742.60 158.91)">Distributed traces</text>
<text x="774.60" y="173.58" font-size="6.63" fill="#454646" stroke="#454646" stroke-width="0.14" textLength="19.00" lengthAdjust="spacingAndGlyphs" transform="rotate(0.06 774.60 173.58)">Events</text>
<text x="759.10" y="188.25" font-size="6.63" fill="#454646" stroke="#454646" stroke-width="0.14" textLength="34.50" lengthAdjust="spacingAndGlyphs" transform="rotate(0.06 759.10 188.25)">Related logs</text>
<rect x="8.25" y="243.75" width="684.75" height="214.50" fill="#fff"/>
<text x="15.75" y="260.50" font-size="9.42" fill="#363636" stroke="#363636" stroke-width="0.5" textLength="38.50" lengthAdjust="spacingAndGlyphs" transform="rotate(0.06 15.75 260.50)">Topology</text>
<polyline points="675.6,259.55 678.4,256.45 681.2,259.55" fill="none" stroke="#0a8d9c" stroke-width="1.3" stroke-linecap="round" stroke-linejoin="round"/>
<text x="23.00" y="288.75" font-size="9.42" fill="#363636" stroke="#363636" stroke-width="0.55" textLength="68.25" lengthAdjust="spacingAndGlyphs" transform="rotate(0.06 23.00 288.75)">Related services</text>
<text x="23.00" y="296.90" font-size="4.82" fill="#5c5c5c" stroke="#5c5c5c" stroke-width="0.1" textLength="48.25" lengthAdjust="spacingAndGlyphs" transform="rotate(0.06 23.00 296.90)">Contains 6 Services.</text>
<rect x="616.67" y="278.68" width="57.40" height="13.90" fill="#fff" stroke="#62c5d0" stroke-width="0.85" rx="1.3"/>
<text x="623.62" y="287.80" font-size="6.63" fill="#0093a3" stroke="#0093a3" stroke-width="0.12" textLength="43.50" lengthAdjust="spacingAndGlyphs" transform="rotate(0.06 623.62 287.80)">View backtrace</text>
<text x="28.25" y="310.70" font-size="5.67" fill="#454646" stroke="#454646" stroke-width="0.4" textLength="14.75" lengthAdjust="spacingAndGlyphs" transform="rotate(0.06 28.25 310.70)">Name</text>
<text x="316.50" y="310.70" font-size="5.67" fill="#454646" stroke="#454646" stroke-width="0.16" textLength="21.00" lengthAdjust="spacingAndGlyphs" transform="rotate(0.06 316.50 310.70)">Relation</text>
<text x="475.00" y="310.70" font-size="5.67" fill="#454646" stroke="#454646" stroke-width="0.16" textLength="30.50" lengthAdjust="spacingAndGlyphs" transform="rotate(0.06 475.00 310.70)">Throughput</text>
<text x="553.75" y="310.70" font-size="5.67" fill="#454646" stroke="#454646" stroke-width="0.16" textLength="54.50" lengthAdjust="spacingAndGlyphs" transform="rotate(0.06 553.75 310.70)">Failure rate [Average]</text>
<text x="655.00" y="310.70" font-size="5.67" fill="#454646" stroke="#454646" stroke-width="0.16" textLength="18.00" lengthAdjust="spacingAndGlyphs" transform="rotate(0.06 655.00 310.70)">Details</text>
<g fill="#333"><path d="M46.7 308.45 L48.050000000000004 306.4 L49.400000000000006 308.45 Z"/><path d="M46.7 309.34999999999997 L48.050000000000004 311.4 L49.400000000000006 309.34999999999997 Z"/></g><g fill="#a3a3a3"><path d="M341.5 308.45 L342.85 306.4 L344.2 308.45 Z"/><path d="M341.5 309.34999999999997 L342.85 311.4 L344.2 309.34999999999997 Z"/></g><g fill="#a3a3a3"><path d="M508.9 308.45 L510.25 306.4 L511.59999999999997 308.45 Z"/><path d="M508.9 309.34999999999997 L510.25 311.4 L511.59999999999997 309.34999999999997 Z"/></g><g fill="#a3a3a3"><path d="M611.6 308.45 L612.95 306.4 L614.3000000000001 308.45 Z"/><path d="M611.6 309.34999999999997 L612.95 311.4 L614.3000000000001 309.34999999999997 Z"/></g>
<rect x="23.00" y="317.20" width="655.25" height="0.60" fill="#e2e2e2"/>
<text x="47.50" y="330.30" font-size="6.63" fill="#0098ab" stroke="#0098ab" stroke-width="0.14" textLength="63.00" lengthAdjust="spacingAndGlyphs" transform="rotate(0.06 47.50 330.30)">AuthenticationService</text>
<text x="316.50" y="330.30" font-size="6.63" fill="#454646" stroke="#454646" stroke-width="0.18" textLength="26.50" lengthAdjust="spacingAndGlyphs" transform="rotate(0.06 316.50 330.30)">Incoming</text>
<text x="505.14" y="330.30" font-size="6.63" fill="#454646" stroke="#454646" stroke-width="0.18" textLength="6.86" lengthAdjust="spacingAndGlyphs" transform="rotate(0.06 505.14 330.30)">60</text>
<text x="604.50" y="330.30" font-size="6.63" fill="#454646" stroke="#454646" stroke-width="0.18" textLength="10.50" lengthAdjust="spacingAndGlyphs" transform="rotate(0.06 604.50 330.30)">0 %</text>
<polyline points="661.75,326.95 664.6,330.05 667.45,326.95" fill="none" stroke="#008f9c" stroke-width="1.25" stroke-linecap="round" stroke-linejoin="round"/>
<rect x="538.25" y="336.70" width="43.50" height="0.80" fill="#f5a3aa"/>
<g fill="#78c9f4"><rect x="435.60" y="323.64" width="0.88" height="14.06"/><rect x="437.01" y="323.25" width="0.88" height="14.45"/><rect x="438.43" y="323.08" width="0.88" height="14.62"/><rect x="439.84" y="322.59" width="0.88" height="15.11"/><rect x="441.25" y="323.26" width="0.88" height="14.44"/><rect x="442.67" y="322.66" width="0.88" height="15.04"/><rect x="444.08" y="325.60" width="0.88" height="12.10"/><rect x="445.49" y="324.16" width="0.88" height="13.54"/><rect x="446.91" y="322.59" width="0.88" height="15.11"/><rect x="448.32" y="323.56" width="0.88" height="14.14"/><rect x="449.73" y="322.73" width="0.88" height="14.97"/><rect x="451.15" y="325.33" width="0.88" height="12.37"/><rect x="452.56" y="324.15" width="0.88" height="13.55"/><rect x="453.97" y="324.89" width="0.88" height="12.81"/><rect x="455.39" y="323.91" width="0.88" height="13.79"/><rect x="456.80" y="323.81" width="0.88" height="13.89"/><rect x="458.21" y="325.66" width="0.88" height="12.04"/><rect x="459.63" y="324.98" width="0.88" height="12.72"/><rect x="461.04" y="324.78" width="0.88" height="12.92"/><rect x="462.45" y="322.68" width="0.88" height="15.02"/><rect x="463.87" y="323.17" width="0.88" height="14.53"/><rect x="465.28" y="325.17" width="0.88" height="12.53"/><rect x="466.69" y="323.07" width="0.88" height="14.63"/><rect x="468.11" y="325.24" width="0.88" height="12.46"/><rect x="469.52" y="323.66" width="0.88" height="14.04"/><rect x="470.93" y="325.28" width="0.88" height="12.42"/><rect x="472.35" y="325.69" width="0.88" height="12.01"/><rect x="473.76" y="322.82" width="0.88" height="14.88"/><rect x="475.17" y="325.01" width="0.88" height="12.69"/><rect x="476.59" y="327.28" width="0.88" height="10.42"/></g>
<g fill="none" stroke="#2a2a2a" stroke-width="0.75" stroke-linecap="round" stroke-linejoin="round"><path d="M37.30 324.10 L36.50 324.80 L37.10 328.60 L39.25 330.70 L41.80 328.60 L42.50 324.80 L41.40 324.10 L40.50 325.50 L38.20 325.50 Z"/><circle cx="32.90" cy="327.90" r="2.1"/><path d="M33.60 329.90 L30.10 332.80 M35.20 330.30 L40.20 331.30 L43.20 333.00 M34.60 327.40 L37.00 328.00"/></g><g fill="#111"><circle cx="37.30" cy="324.30" r="0.7"/><circle cx="41.40" cy="324.30" r="0.7"/><circle cx="34.30" cy="326.20" r="0.65"/><circle cx="34.10" cy="331.00" r="0.65"/><circle cx="38.40" cy="327.20" r="0.45"/><circle cx="40.40" cy="327.20" r="0.45"/><circle cx="39.30" cy="328.80" r="0.4"/></g>
<rect x="23.00" y="339.50" width="655.25" height="21.75" fill="#f8f8f8"/>
<text x="47.50" y="352.50" font-size="6.63" fill="#0098ab" stroke="#0098ab" stroke-width="0.14" textLength="43.75" lengthAdjust="spacingAndGlyphs" transform="rotate(0.06 47.50 352.50)">BookingService</text>
<text x="316.50" y="352.50" font-size="6.63" fill="#454646" stroke="#454646" stroke-width="0.18" textLength="26.50" lengthAdjust="spacingAndGlyphs" transform="rotate(0.06 316.50 352.50)">Incoming</text>
<text x="505.14" y="352.50" font-size="6.63" fill="#454646" stroke="#454646" stroke-width="0.18" textLength="6.86" lengthAdjust="spacingAndGlyphs" transform="rotate(0.06 505.14 352.50)">17</text>
<text x="604.50" y="352.50" font-size="6.63" fill="#454646" stroke="#454646" stroke-width="0.18" textLength="10.50" lengthAdjust="spacingAndGlyphs" transform="rotate(0.06 604.50 352.50)">0 %</text>
<polyline points="661.75,349.15 664.6,352.25 667.45,349.15" fill="none" stroke="#008f9c" stroke-width="1.25" stroke-linecap="round" stroke-linejoin="round"/>
<rect x="538.25" y="358.90" width="43.50" height="0.80" fill="#f5a3aa"/>
<g fill="#78c9f4"><rect x="435.60" y="348.74" width="0.88" height="11.16"/><rect x="437.01" y="349.01" width="0.88" height="10.89"/><rect x="438.43" y="350.40" width="0.88" height="9.50"/><rect x="439.84" y="348.79" width="0.88" height="11.11"/><rect x="441.25" y="349.80" width="0.88" height="10.10"/><rect x="442.67" y="349.45" width="0.88" height="10.45"/><rect x="444.08" y="350.56" width="0.88" height="9.34"/><rect x="445.49" y="348.74" width="0.88" height="11.16"/><rect x="446.91" y="349.26" width="0.88" height="10.64"/><rect x="448.32" y="348.46" width="0.88" height="11.44"/><rect x="449.73" y="348.43" width="0.88" height="11.47"/><rect x="451.15" y="349.56" width="0.88" height="10.34"/><rect x="452.56" y="349.02" width="0.88" height="10.88"/><rect x="453.97" y="349.03" width="0.88" height="10.87"/><rect x="455.39" y="348.56" width="0.88" height="11.34"/><rect x="456.80" y="348.26" width="0.88" height="11.64"/><rect x="458.21" y="347.26" width="0.88" height="12.64"/><rect x="459.63" y="346.25" width="0.88" height="13.65"/><rect x="461.04" y="347.59" width="0.88" height="12.31"/><rect x="462.45" y="346.08" width="0.88" height="13.82"/><rect x="463.87" y="347.19" width="0.88" height="12.71"/><rect x="465.28" y="347.69" width="0.88" height="12.21"/><rect x="466.69" y="346.97" width="0.88" height="12.93"/><rect x="468.11" y="348.29" width="0.88" height="11.61"/><rect x="469.52" y="349.15" width="0.88" height="10.75"/><rect x="470.93" y="349.14" width="0.88" height="10.76"/><rect x="472.35" y="348.89" width="0.88" height="11.01"/><rect x="473.76" y="350.65" width="0.88" height="9.25"/><rect x="475.17" y="348.58" width="0.88" height="11.32"/><rect x="476.59" y="352.56" width="0.88" height="7.34"/></g>
<g fill="none" stroke="#2a2a2a" stroke-width="0.75" stroke-linecap="round" stroke-linejoin="round"><path d="M37.30 346.30 L36.50 347.00 L37.10 350.80 L39.25 352.90 L41.80 350.80 L42.50 347.00 L41.40 346.30 L40.50 347.70 L38.20 347.70 Z"/><circle cx="32.90" cy="350.10" r="2.1"/><path d="M33.60 352.10 L30.10 355.00 M35.20 352.50 L40.20 353.50 L43.20 355.20 M34.60 349.60 L37.00 350.20"/></g><g fill="#111"><circle cx="37.30" cy="346.50" r="0.7"/><circle cx="41.40" cy="346.50" r="0.7"/><circle cx="34.30" cy="348.40" r="0.65"/><circle cx="34.10" cy="353.20" r="0.65"/><circle cx="38.40" cy="349.40" r="0.45"/><circle cx="40.40" cy="349.40" r="0.45"/><circle cx="39.30" cy="351.00" r="0.4"/></g>
<text x="47.50" y="374.20" font-size="6.63" fill="#0098ab" stroke="#0098ab" stroke-width="0.14" textLength="59.50" lengthAdjust="spacingAndGlyphs" transform="rotate(0.06 47.50 374.20)">CreditCardValidation</text>
<text x="316.50" y="374.20" font-size="6.63" fill="#454646" stroke="#454646" stroke-width="0.18" textLength="26.50" lengthAdjust="spacingAndGlyphs" transform="rotate(0.06 316.50 374.20)">Incoming</text>
<text x="508.57" y="374.20" font-size="6.63" fill="#454646" stroke="#454646" stroke-width="0.18" textLength="3.43" lengthAdjust="spacingAndGlyphs" transform="rotate(0.06 508.57 374.20)">7</text>
<text x="604.50" y="374.20" font-size="6.63" fill="#454646" stroke="#454646" stroke-width="0.18" textLength="10.50" lengthAdjust="spacingAndGlyphs" transform="rotate(0.06 604.50 374.20)">0 %</text>
<polyline points="661.75,370.84999999999997 664.6,373.95 667.45,370.84999999999997" fill="none" stroke="#008f9c" stroke-width="1.25" stroke-linecap="round" stroke-linejoin="round"/>
<rect x="538.25" y="380.60" width="43.50" height="0.80" fill="#f5a3aa"/>
<g fill="#78c9f4"><rect x="435.60" y="372.10" width="0.88" height="9.50"/><rect x="437.01" y="371.72" width="0.88" height="9.88"/><rect x="438.43" y="375.03" width="0.88" height="6.57"/><rect x="439.84" y="371.95" width="0.88" height="9.65"/><rect x="441.25" y="373.63" width="0.88" height="7.97"/><rect x="442.67" y="372.77" width="0.88" height="8.83"/><rect x="444.08" y="375.03" width="0.88" height="6.57"/><rect x="445.49" y="374.84" width="0.88" height="6.76"/><rect x="446.91" y="374.23" width="0.88" height="7.37"/><rect x="448.32" y="371.00" width="0.88" height="10.60"/><rect x="449.73" y="373.83" width="0.88" height="7.77"/><rect x="451.15" y="371.28" width="0.88" height="10.32"/><rect x="452.56" y="370.14" width="0.88" height="11.46"/><rect x="453.97" y="369.52" width="0.88" height="12.08"/><rect x="455.39" y="371.24" width="0.88" height="10.36"/><rect x="456.80" y="370.46" width="0.88" height="11.14"/><rect x="458.21" y="369.07" width="0.88" height="12.53"/><rect x="459.63" y="367.48" width="0.88" height="14.12"/><rect x="461.04" y="369.77" width="0.88" height="11.83"/><rect x="462.45" y="367.11" width="0.88" height="14.49"/><rect x="463.87" y="367.10" width="0.88" height="14.50"/><rect x="465.28" y="367.30" width="0.88" height="14.30"/><rect x="466.69" y="371.23" width="0.88" height="10.37"/><rect x="468.11" y="368.32" width="0.88" height="13.28"/><rect x="469.52" y="372.46" width="0.88" height="9.14"/><rect x="470.93" y="372.11" width="0.88" height="9.49"/><rect x="472.35" y="371.56" width="0.88" height="10.04"/><rect x="473.76" y="370.73" width="0.88" height="10.87"/><rect x="475.17" y="373.33" width="0.88" height="8.27"/><rect x="476.59" y="373.05" width="0.88" height="8.55"/></g>
<g fill="#0d0d0d"><rect x="33.4" y="366.50" width="6.9" height="5.7" rx="2.2"/><rect x="34.5" y="368.20" width="4.7" height="1.7" rx="0.6" fill="#fff"/><path d="M33 378.80 L33 374.60 Q33 373.30 34.4 373.30 L39.3 373.30 Q40.7 373.30 40.7 374.60 L40.7 378.80 Z"/></g>
<rect x="23.00" y="383.00" width="655.25" height="22.00" fill="#f8f8f8"/>
<text x="47.50" y="396.10" font-size="6.63" fill="#0098ab" stroke="#0098ab" stroke-width="0.14" textLength="121.00" lengthAdjust="spacingAndGlyphs" transform="rotate(0.06 47.50 396.10)">JmsHotDealProvider$DealRequestListener</text>
<text x="316.50" y="396.10" font-size="6.63" fill="#454646" stroke="#454646" stroke-width="0.18" textLength="26.50" lengthAdjust="spacingAndGlyphs" transform="rotate(0.06 316.50 396.10)">Incoming</text>
<text x="508.57" y="396.10" font-size="6.63" fill="#454646" stroke="#454646" stroke-width="0.18" textLength="3.43" lengthAdjust="spacingAndGlyphs" transform="rotate(0.06 508.57 396.10)">5</text>
<text x="604.50" y="396.10" font-size="6.63" fill="#454646" stroke="#454646" stroke-width="0.18" textLength="10.50" lengthAdjust="spacingAndGlyphs" transform="rotate(0.06 604.50 396.10)">0 %</text>
<polyline points="661.75,392.74999999999994 664.6,395.84999999999997 667.45,392.74999999999994" fill="none" stroke="#008f9c" stroke-width="1.25" stroke-linecap="round" stroke-linejoin="round"/>
<rect x="538.25" y="402.50" width="43.50" height="0.80" fill="#f5a3aa"/>
<g fill="#78c9f4"><rect x="435.60" y="390.86" width="0.88" height="12.64"/><rect x="437.01" y="391.56" width="0.88" height="11.94"/><rect x="438.43" y="391.55" width="0.88" height="11.95"/><rect x="439.84" y="391.97" width="0.88" height="11.53"/><rect x="441.25" y="392.27" width="0.88" height="11.23"/><rect x="442.67" y="392.05" width="0.88" height="11.45"/><rect x="444.08" y="390.43" width="0.88" height="13.07"/><rect x="445.49" y="389.51" width="0.88" height="13.99"/><rect x="446.91" y="392.02" width="0.88" height="11.48"/><rect x="448.32" y="392.35" width="0.88" height="11.15"/><rect x="449.73" y="389.54" width="0.88" height="13.96"/><rect x="451.15" y="390.90" width="0.88" height="12.60"/><rect x="452.56" y="391.28" width="0.88" height="12.22"/><rect x="453.97" y="391.79" width="0.88" height="11.71"/><rect x="455.39" y="390.72" width="0.88" height="12.78"/><rect x="456.80" y="390.02" width="0.88" height="13.48"/><rect x="458.21" y="391.13" width="0.88" height="12.37"/><rect x="459.63" y="391.23" width="0.88" height="12.27"/><rect x="461.04" y="392.33" width="0.88" height="11.17"/><rect x="462.45" y="389.75" width="0.88" height="13.75"/><rect x="463.87" y="392.40" width="0.88" height="11.10"/><rect x="465.28" y="391.02" width="0.88" height="12.48"/><rect x="466.69" y="389.98" width="0.88" height="13.52"/><rect x="468.11" y="392.11" width="0.88" height="11.39"/><rect x="469.52" y="390.31" width="0.88" height="13.19"/><rect x="470.93" y="389.65" width="0.88" height="13.85"/><rect x="472.35" y="390.61" width="0.88" height="12.89"/><rect x="473.76" y="390.14" width="0.88" height="13.36"/><rect x="475.17" y="392.18" width="0.88" height="11.32"/><rect x="476.59" y="393.41" width="0.88" height="10.09"/></g>
<g fill="none" stroke="#2a2a2a" stroke-width="0.75" stroke-linecap="round" stroke-linejoin="round"><path d="M37.30 389.90 L36.50 390.60 L37.10 394.40 L39.25 396.50 L41.80 394.40 L42.50 390.60 L41.40 389.90 L40.50 391.30 L38.20 391.30 Z"/><circle cx="32.90" cy="393.70" r="2.1"/><path d="M33.60 395.70 L30.10 398.60 M35.20 396.10 L40.20 397.10 L43.20 398.80 M34.60 393.20 L37.00 393.80"/></g><g fill="#111"><circle cx="37.30" cy="390.10" r="0.7"/><circle cx="41.40" cy="390.10" r="0.7"/><circle cx="34.30" cy="392.00" r="0.65"/><circle cx="34.10" cy="396.80" r="0.65"/><circle cx="38.40" cy="393.00" r="0.45"/><circle cx="40.40" cy="393.00" r="0.45"/><circle cx="39.30" cy="394.60" r="0.4"/></g>
<text x="47.50" y="417.90" font-size="6.63" fill="#0098ab" stroke="#0098ab" stroke-width="0.14" textLength="42.50" lengthAdjust="spacingAndGlyphs" transform="rotate(0.06 47.50 417.90)">JourneyService</text>
<text x="316.50" y="417.90" font-size="6.63" fill="#454646" stroke="#454646" stroke-width="0.18" textLength="26.50" lengthAdjust="spacingAndGlyphs" transform="rotate(0.06 316.50 417.90)">Incoming</text>
<text x="501.71" y="417.90" font-size="6.63" fill="#454646" stroke="#454646" stroke-width="0.18" textLength="10.29" lengthAdjust="spacingAndGlyphs" transform="rotate(0.06 501.71 417.90)">280</text>
<text x="604.50" y="417.90" font-size="6.63" fill="#454646" stroke="#454646" stroke-width="0.18" textLength="10.50" lengthAdjust="spacingAndGlyphs" transform="rotate(0.06 604.50 417.90)">0 %</text>
<polyline points="661.75,414.54999999999995 664.6,417.65 667.45,414.54999999999995" fill="none" stroke="#008f9c" stroke-width="1.25" stroke-linecap="round" stroke-linejoin="round"/>
<rect x="538.25" y="424.30" width="43.50" height="0.80" fill="#f5a3aa"/>
<g fill="#78c9f4"><rect x="435.60" y="414.84" width="0.88" height="10.46"/><rect x="437.01" y="412.75" width="0.88" height="12.55"/><rect x="438.43" y="414.39" width="0.88" height="10.91"/><rect x="439.84" y="413.89" width="0.88" height="11.41"/><rect x="441.25" y="412.22" width="0.88" height="13.08"/><rect x="442.67" y="412.61" width="0.88" height="12.69"/><rect x="444.08" y="412.16" width="0.88" height="13.14"/><rect x="445.49" y="413.62" width="0.88" height="11.68"/><rect x="446.91" y="413.37" width="0.88" height="11.93"/><rect x="448.32" y="412.46" width="0.88" height="12.84"/><rect x="449.73" y="412.98" width="0.88" height="12.32"/><rect x="451.15" y="413.28" width="0.88" height="12.02"/><rect x="452.56" y="412.65" width="0.88" height="12.65"/><rect x="453.97" y="413.13" width="0.88" height="12.17"/><rect x="455.39" y="412.16" width="0.88" height="13.14"/><rect x="456.80" y="410.09" width="0.88" height="15.21"/><rect x="458.21" y="410.01" width="0.88" height="15.29"/><rect x="459.63" y="410.93" width="0.88" height="14.37"/><rect x="461.04" y="411.32" width="0.88" height="13.98"/><rect x="462.45" y="411.90" width="0.88" height="13.40"/><rect x="463.87" y="412.83" width="0.88" height="12.47"/><rect x="465.28" y="412.53" width="0.88" height="12.77"/><rect x="466.69" y="411.28" width="0.88" height="14.02"/><rect x="468.11" y="411.32" width="0.88" height="13.98"/><rect x="469.52" y="413.12" width="0.88" height="12.18"/><rect x="470.93" y="412.11" width="0.88" height="13.19"/><rect x="472.35" y="412.36" width="0.88" height="12.94"/><rect x="473.76" y="412.78" width="0.88" height="12.52"/><rect x="475.17" y="413.01" width="0.88" height="12.29"/><rect x="476.59" y="415.07" width="0.88" height="10.23"/></g>
<g fill="none" stroke="#2a2a2a" stroke-width="0.75" stroke-linecap="round" stroke-linejoin="round"><path d="M37.30 411.70 L36.50 412.40 L37.10 416.20 L39.25 418.30 L41.80 416.20 L42.50 412.40 L41.40 411.70 L40.50 413.10 L38.20 413.10 Z"/><circle cx="32.90" cy="415.50" r="2.1"/><path d="M33.60 417.50 L30.10 420.40 M35.20 417.90 L40.20 418.90 L43.20 420.60 M34.60 415.00 L37.00 415.60"/></g><g fill="#111"><circle cx="37.30" cy="411.90" r="0.7"/><circle cx="41.40" cy="411.90" r="0.7"/><circle cx="34.30" cy="413.80" r="0.65"/><circle cx="34.10" cy="418.60" r="0.65"/><circle cx="38.40" cy="414.80" r="0.45"/><circle cx="40.40" cy="414.80" r="0.45"/><circle cx="39.30" cy="416.40" r="0.4"/></g>
<polyline points="326.4,435.8 323.4,438.3 326.4,440.8" fill="none" stroke="#b5b5b5" stroke-width="0.9" stroke-linecap="round" stroke-linejoin="round"/>
<text x="341.45" y="440.30" font-size="5.99" fill="#222" stroke="#222" stroke-width="0.18" font-weight="bold" textLength="3.10" lengthAdjust="spacingAndGlyphs" transform="rotate(0.06 341.45 440.30)">1</text>
<text x="356.20" y="440.30" font-size="5.99" fill="#454646" stroke="#454646" stroke-width="0.18" textLength="3.10" lengthAdjust="spacingAndGlyphs" transform="rotate(0.06 356.20 440.30)">2</text>
<polyline points="375.0,435.6 378.4,438.3 375.0,441.0" fill="none" stroke="#0a8fa0" stroke-width="1.35" stroke-linecap="round" stroke-linejoin="round"/>
<rect x="8.25" y="467.60" width="684.75" height="5.40" fill="#f9f9f9"/>
</svg>
</div></body></html>
